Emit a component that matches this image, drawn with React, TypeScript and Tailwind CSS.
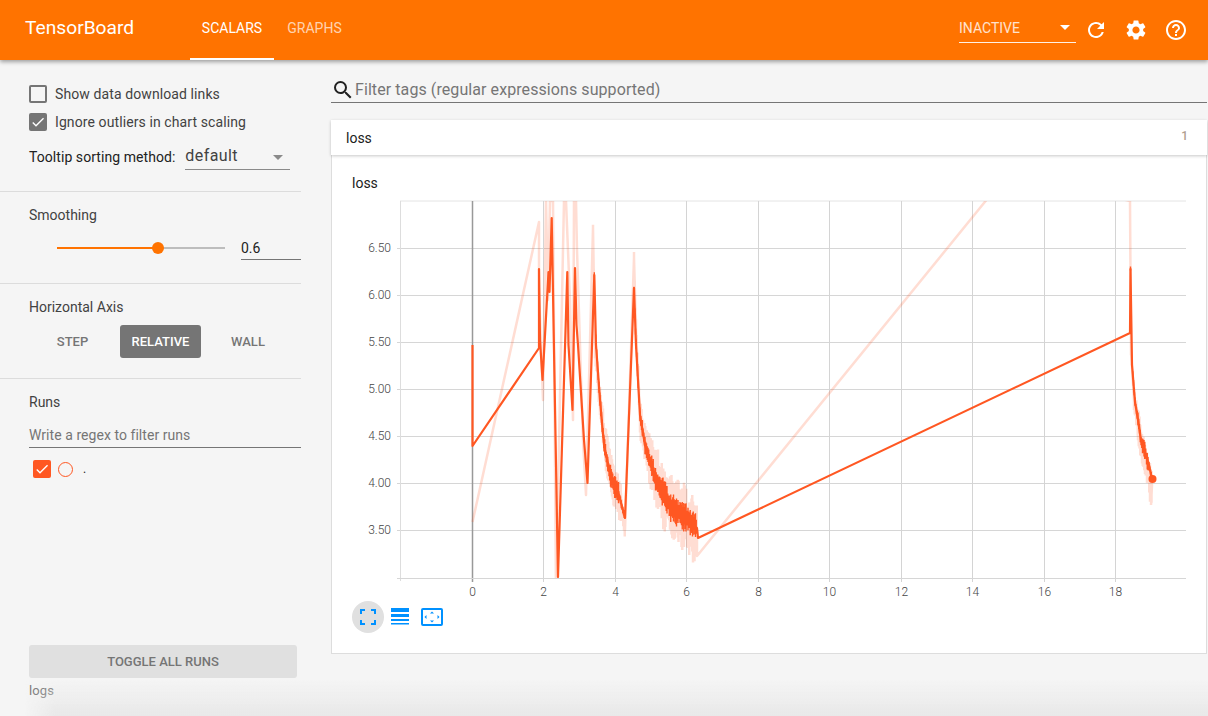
import { MdHelpOutline, MdRefresh, MdSearch, MdSettings, MdCheck } from "react-icons/md";

// coordinates below are in the chart svg's own space (page px minus 340,195)
const OX = 340;
const OY = 195;

type Key = [number, number, number];

function rnd(i: number) {
  const v = Math.sin(i * 12.9898) * 43758.5453;
  return v - Math.floor(v);
}

// the key points as one line, noise is added separately by noiseBars
function linePath(points: Key[]) {
  return points.map((p, i) => `${i === 0 ? "M" : "L"}${p[0] - OX} ${p[1] - OY}`).join(" ");
}

// short vertical bars along the noisy stretches (third value = half height)
function noiseBars(points: Key[], seed: number, base: number, spread: number) {
  const out: string[] = [];
  let n = seed;
  points.forEach((p, i) => {
    if (i === 0 || p[2] === 0) return;
    const prev = points[i - 1];
    for (let x = prev[0]; x < p[0]; x += 0.75) {
      const t = (x - prev[0]) / (p[0] - prev[0]);
      const y = prev[1] + (p[1] - prev[1]) * t;
      n += 1;
      const wobble = (rnd(seed + Math.floor(x / 3)) - 0.5) * p[2] * 0.5;
      const half = p[2] * (base + spread * rnd(n));
      out.push(`M${(x - OX).toFixed(2)} ${(y + wobble - half - OY).toFixed(1)}V${(y + wobble + half - OY).toFixed(1)}`);
    }
  });
  return out.join("");
}

const smooth: Key[] = [
  [472.5, 345, 0], [472.5, 446, 0], [539, 348, 0], [539, 269, 0], [540, 340, 0], [542.5, 380, 0],
  [548.5, 272, 0], [549.5, 292, 0], [551.7, 218, 0], [554, 350, 0], [558, 577, 0], [567.3, 272, 0],
  [568.5, 345, 0], [572.5, 410, 0], [575, 268, 0], [576.5, 325, 0], [578, 345, 0], [584, 440, 0],
  [587.5, 483, 0], [594.3, 275, 0], [596, 345, 3], [600, 400, 5], [604, 445, 7], [609, 468, 9],
  [614, 486, 10], [619, 495, 10], [625, 518, 4], [634, 288, 0], [636, 345, 3], [640, 415, 6], [645, 445, 8],
  [651, 465, 10], [657, 482, 12], [664, 495, 13], [672, 508, 13], [680, 512, 13], [688, 520, 13], [697, 528, 12],
  [698, 538, 0], [1130, 333, 0], [1130.5, 269, 0], [1132, 365, 2], [1135, 402, 3], [1138, 420, 4],
  [1141, 440, 6], [1145, 452, 8], [1149, 465, 8], [1152, 479, 4],
];

const raw: Key[] = [
  [472.5, 522, 0], [539, 222, 0], [539, 290, 0], [543, 400, 0], [546, 201, 0], [548, 300, 0], [550, 201, 0],
  [553, 201, 0], [556, 590, 0], [564, 201, 0], [566, 201, 0], [570, 300, 0], [573, 420, 0],
  [574, 201, 0], [576, 201, 0], [577, 250, 0], [583, 440, 0], [586, 495, 0], [593, 228, 0], [595, 350, 5],
  [600, 400, 11], [606, 450, 16], [614, 490, 20], [621, 500, 18], [625, 530, 8], [634, 258, 0], [636, 330, 8],
  [640, 415, 12], [647, 450, 18], [655, 480, 24], [664, 495, 28], [674, 508, 30], [684, 518, 30], [697, 530, 28],
  [697, 556, 0], [1010, 171, 0], [1130, 201, 0], [1131, 350, 0], [1134, 400, 6], [1138, 425, 12], [1142, 445, 16],
  [1147, 470, 16], [1152, 485, 18], [1151, 505, 0],
];

const smoothLine = linePath(smooth);
const smoothBars = noiseBars(smooth, 5, 0.5, 0.6);
const rawLine = linePath(raw);
const rawBars = noiseBars(raw, 300, 0.5, 0.6);
const xTicks = [0, 2, 4, 6, 8, 10, 12, 14, 16, 18];
const yTicks = ["3.50", "4.00", "4.50", "5.00", "5.50", "6.00", "6.50"];

function LossChart() {
  const left = 400 - OX;
  const right = 1186 - OX;
  const top = 201 - OY;
  const bottom = 578 - OY;
  return (
    <svg width={860} height={407} className="block">
      <defs>
        <clipPath id="plot">
          <rect x={left} y={top} width={right - left} height={bottom - top} />
        </clipPath>
      </defs>
      <line x1={left} x2={right} y1={top} y2={top} stroke="#e4e4e4" />
      {yTicks.map((t, i) => {
        const y = 530 - 47 * i - OY + 0.5;
        return (
          <g key={t}>
            <line x1={left - 3} x2={right} y1={y} y2={y} stroke="#d6d6d6" />
            <text x={left - 9} y={y + 3.5} textAnchor="end" fontSize={12} fontWeight={300} fill="#444">{t}</text>
          </g>
        );
      })}
      <line x1={left + 0.5} x2={left + 0.5} y1={top} y2={bottom + 3} stroke="#ddd" />
      {xTicks.map((t, i) => {
        const x = Math.round(472 + 71.44 * i) - OX + 0.5;
        return (
          <g key={t}>
            <line x1={x} x2={x} y1={top} y2={bottom + 4} stroke={t === 0 ? "#999" : "#d4d4d4"} strokeWidth={t === 0 ? 1.5 : 1} />
            <text x={x} y={bottom + 18} textAnchor="middle" fontSize={12} fontWeight={300} fill="#444">{t}</text>
          </g>
        );
      })}
      <line x1={left - 3} x2={right} y1={bottom + 0.5} y2={bottom + 0.5} stroke="#d6d6d6" />
      <g clipPath="url(#plot)" fill="none" strokeLinejoin="round">
        <path d={`${rawLine}${rawBars}`} stroke="#ff5722" strokeOpacity={0.2} strokeWidth={2.5} />
        <path d={smoothLine} stroke="#ff5722" strokeWidth={2.2} />
        <path d={smoothBars} stroke="#ff5722" strokeWidth={1.4} />
      </g>
      <circle cx={1152.5 - OX} cy={479 - OY} r={4} fill="#ff5722" />
    </svg>
  );
}

function Divider() {
  return <div className="h-px bg-[#dcdcdc]" />;
}

export default function App() {
  return (
    <div className="relative flex h-[716px] w-[1208px] flex-col overflow-hidden bg-[#f5f5f5] font-['Roboto',sans-serif]">
      {/* Toolbar */}
      <header className="z-10 flex h-[60px] shrink-0 items-center bg-[#ff7300] shadow-[0_2px_4px_rgba(0,0,0,0.35)]">
        <div className="mb-[3px] ml-[25px] w-[165px] text-[19.2px] text-white">TensorBoard</div>
        <div className="flex h-full">
          <div className="flex w-[84px] items-center justify-center border-b-2 border-white pb-0.5 text-sm text-white">SCALARS</div>
          <div className="flex w-[81px] items-center justify-center pb-1 text-sm text-white/70">GRAPHS</div>
        </div>
        <div className="ml-auto flex items-center">
          <div className="flex h-[25px] w-[117px] items-center justify-between border-b border-white/90 pb-1 text-sm text-white/80">
            <span>INACTIVE</span>
            <span className="mr-1.5 h-0 w-0 border-x-[5px] border-t-[5px] border-x-transparent border-t-white" />
          </div>
          <MdRefresh className="ml-2 text-white" size={24} />
          <MdSettings className="ml-4 text-white" size={24} />
          <MdHelpOutline className="ml-4 mr-5 text-white" size={24} />
        </div>
      </header>

      <div className="flex min-h-0 flex-1">
        {/* Sidebar */}
        <aside className="flex w-[301px] shrink-0 flex-col">
          <section className="h-[131px] pl-[29px] pt-[25px]">
            <label className="flex h-[18px] items-center gap-2 text-sm tracking-[0.1px] text-[#424242]">
              <span className="h-[18px] w-[18px] rounded-[2px] border-2 border-[#757575]" />
              Show data download links
            </label>
            <label className="mt-[10px] flex h-[18px] items-center gap-2 text-sm tracking-[0.1px] text-[#424242]">
              <span className="flex h-[18px] w-[18px] items-center justify-center rounded-[2px] bg-[#757575]">
                <MdCheck className="text-white" size={16} />
              </span>
              Ignore outliers in chart scaling
            </label>
            <div className="mt-[12px] flex items-center">
              <span className="text-sm tracking-[0.06px] text-[#212121]">Tooltip sorting method:</span>
              <div className="ml-[10px] flex h-[27px] w-[105px] items-center justify-between border-b border-[#8a8a8a] text-base text-[#424242]">
                <span className="tracking-[0.4px]">default</span>
                <span className="mr-[7px] mt-0.5 h-0 w-0 border-x-[5px] border-t-[5px] border-x-transparent border-t-[#8a8a8a]" />
              </div>
            </div>
          </section>
          <Divider />

          <section className="h-[91px] pl-[29px] pt-[15px]">
            <div className="text-sm leading-[17px] text-[#424242]">Smoothing</div>
            <div className="mt-[12px] flex items-center">
              <div className="ml-[28px] flex h-[2px] w-[168px] items-center bg-[#bdbdbd]">
                <div className="h-[2px] w-[101px] bg-[#ff7300]" />
                <div className="-ml-[6px] h-3 w-3 rounded-full bg-[#ff7300]" />
              </div>
              <div className="ml-4 flex h-6 w-[60px] items-center border-b border-[#757575] text-sm text-[#212121]">0.6</div>
            </div>
          </section>
          <Divider />

          <section className="h-[94px] pl-[29px] pt-[15px]">
            <div className="text-sm leading-[17px] text-[#424242]">Horizontal Axis</div>
            <div className="mt-[9px] flex h-[33px] items-center text-[13px] font-medium text-[#757575]">
              <span className="flex w-[91px] justify-center pr-[4px]">STEP</span>
              <span className="flex h-[33px] w-[81px] items-center justify-center rounded-[3px] bg-[#757575] text-white">RELATIVE</span>
              <span className="flex w-[94px] justify-center">WALL</span>
            </div>
          </section>
          <Divider />

          <section className="flex min-h-0 flex-1 flex-col pl-[29px] pt-[15px]">
            <div className="text-sm leading-[17px] text-[#424242]">Runs</div>
            <div className="mt-[11px] flex h-[26px] items-center border-b border-[#757575] text-sm tracking-[0.05px] text-[#757575]">Write a regex to filter runs</div>
            <div className="ml-1 mt-3 flex items-center">
              <span className="flex h-[18px] w-[18px] items-center justify-center rounded-[2px] bg-[#ff5722]">
                <MdCheck className="text-white" size={16} />
              </span>
              <span className="ml-[7px] h-[15px] w-[15px] rounded-full border-[1.5px] border-[#ff5722]" />
              <span className="ml-[10px] text-xs text-[#212121]">.</span>
            </div>
            <button className="mt-[167px] h-[33px] w-[268px] rounded-[3px] bg-[#e0e0e0] text-[13px] font-medium text-[#757575]">TOGGLE ALL RUNS</button>
            <div className="mt-[3px] text-[13px] tracking-[0.1px] text-[#757575]">logs</div>
          </section>
        </aside>

        {/* Main column */}
        <main className="ml-[30px] flex min-w-0 flex-1 flex-col pr-px">
          <div className="mt-[18px] flex h-[25px] items-center border-b border-[#757575] text-base text-[#757575]">
            <MdSearch className="text-[#212121]" size={24} />
            <span className="tracking-[0.08px]">Filter tags (regular expressions supported)</span>
          </div>
          <div className="z-[1] mt-[17px] flex h-[35px] items-center justify-between bg-white pl-[15px] pr-[19px] text-sm text-[#212121] shadow-[0_1px_3px_rgba(0,0,0,0.22)]">
            <span>loss</span>
            <span className="mb-1 text-xs font-medium text-[#b0a090]">1</span>
          </div>
          <div className="h-[499px] border border-t-0 border-[#dddddd] bg-white">
            <div className="pl-[20px] pt-[20px] text-sm leading-4 text-[#212121]">loss</div>
            <div className="-ml-px mt-[4px] pl-[9px]">
              <LossChart />
            </div>
            <div className="-mt-[1px] ml-[20px] flex items-center">
              <span className="flex h-8 w-8 items-center justify-center rounded-full bg-[#e0e0e0]">
                <svg width="16" height="16" viewBox="0 0 16 16" fill="none" stroke="#0091ff" strokeWidth="2">
                  <path d="M1 5V1h4M11 1h4v4M15 11v4h-4M5 15H1v-4" />
                </svg>
              </span>
              <svg className="ml-[7px]" width="18" height="18" viewBox="0 0 18 18" fill="#0091ff">
                <rect y="0" width="18" height="4" />
                <rect y="6" width="18" height="3" />
                <rect y="11" width="18" height="2" />
                <rect y="15" width="18" height="1.5" />
              </svg>
              <svg className="ml-3" width="22" height="18" viewBox="0 0 22 18" fill="#0091ff">
                <rect x="1" y="1" width="20" height="16" rx="1" fill="none" stroke="#0091ff" strokeWidth="2" />
                <path d="M11 3.5l2 2H9zM11 14.5l2-2H9zM3.5 9l2-2v4zM18.5 9l-2-2v4z" />
              </svg>
            </div>
          </div>
        </main>
      </div>

      {/* soft shadow along the bottom edge of the window */}
      <div className="pointer-events-none absolute bottom-0 left-[25px] right-0 h-[36px] bg-gradient-to-b from-transparent to-[#e8e8e8] [mask-image:linear-gradient(to_right,transparent,black_30px)]" />
    </div>
  );
}
